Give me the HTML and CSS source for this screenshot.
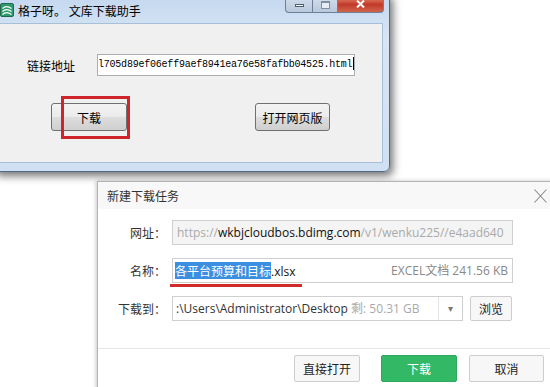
FILE: index.html
```html
<!DOCTYPE html>
<html lang="zh-CN">
<head>
  <meta charset="UTF-8">
  <title>文库下载助手</title>
  <link rel="stylesheet" href="styles.css">
</head>
<body>
<div class="desk">

  <div class="win">
    <div class="win-title">
      <svg class="app-icon" width="14" height="14" viewBox="0 0 14 14">
        <rect x="0.5" y="0.5" width="13" height="13" rx="1.5" fill="#2f9a6c" stroke="#1f6a4a"/>
        <path d="M2.5 5.5c2.5-2.5 5.5-2.5 9 0M2.5 8.5c2.5-2.5 5.5-2.5 9 0M2.5 11.5c2.5-2.5 5.5-2.5 9 0" stroke="#fff" fill="none" stroke-width="1.1"/>
      </svg>
      <span class="win-caption">格子呀。 文库下载助手</span>
      <div class="win-ctrls">
        <span class="ctl ctl-min"><i></i></span>
        <span class="ctl ctl-max"><i></i></span>
        <span class="ctl ctl-close">
          <svg width="9" height="8" viewBox="0 0 9 8">
            <path d="M1 0.5L8 7.5M8 0.5L1 7.5" stroke="#fff" stroke-width="2" fill="none"/>
          </svg>
        </span>
      </div>
    </div>
    <div class="win-client">
      <div class="link-row">
        <span class="link-label">链接地址</span>
        <div class="link-box">l705d89ef06eff9aef8941ea76e58fafbb04525.html<span class="caret"></span></div>
      </div>
      <div class="btn-row">
        <button class="btn-classic">下载<span class="mark"></span></button>
        <button class="btn-classic btn-web">打开网页版</button>
      </div>
    </div>
  </div>

  <div class="dlg">
    <div class="dlg-head">
      <span>新建下载任务</span>
      <svg class="dlg-close" width="13" height="14" viewBox="0 0 13 14">
        <path d="M0.5 0.5L12.5 13.5M12.5 0.5L0.5 13.5" stroke="#888" stroke-width="1.1" fill="none"/>
      </svg>
    </div>
    <div class="dlg-body">
      <div class="form-row">
        <span class="form-label">网址：</span>
        <div class="field field-off"><span class="dim">https://</span>wkbjcloudbos.bdimg.com<span class="dim">/v1/wenku225//e4aad640</span></div>
      </div>
      <div class="form-row row-name">
        <span class="form-label">名称：</span>
        <div class="field field-name">
          <span><span class="sel">各平台预算和目标</span>.xlsx</span>
          <span class="dim2">EXCEL文档 241.56 KB</span>
        </div>
        <span class="underline"></span>
      </div>
      <div class="form-row row-path">
        <span class="form-label">下载到：</span>
        <div class="combo">
          <span class="combo-text">:\Users\Administrator\Desktop <span class="dim">剩: 50.31 GB</span></span>
          <span class="combo-arrow">▾</span>
        </div>
        <button class="btn-flat btn-browse">浏览</button>
      </div>
    </div>
    <div class="dlg-foot">
      <button class="btn-flat btn-open">直接打开</button>
      <button class="btn-flat btn-go">下载</button>
      <button class="btn-flat btn-cancel">取消</button>
    </div>
  </div>

</div>
</body>
</html>
```

FILE: styles.css
```css
* {
  box-sizing: border-box;
}
body {
  margin: 0;
  background: #fff;
  font-family: "Noto Sans CJK SC", sans-serif;
  font-size: 12px;
  color: #000;
}
.desk {
  position: relative;
  width: 550px;
  height: 387px;
  overflow: hidden;
}

/* old windows app */
.win {
  position: absolute;
  left: -8px;
  top: -8px;
  width: 398px;
  height: 180px;
  display: flex;
  flex-direction: column;
  padding: 0 6px 8px;
  background: linear-gradient(#c2d6ee, #d7e6f6 25%, #cfe0f3);
  border: 1px solid #52698a;
  border-radius: 6px;
  box-shadow: 3px 4px 8px rgba(0, 0, 0, 0.55);
}
.win-title {
  height: 30px;
  display: flex;
  align-items: center;
  padding: 6px 0 2px 1px;
}
.app-icon {
  display: block;
}
.win-caption {
  margin-left: 4px;
  font-size: 12px;
  color: #000;
}
.win-ctrls {
  display: flex;
  align-self: flex-start;
  margin-top: -6px;
  margin-left: auto;
  margin-right: -1px;
}
.ctl {
  height: 20px;
  display: flex;
  align-items: center;
  justify-content: center;
  border: 1px solid #6d7f99;
  border-top: none;
}
.ctl-min {
  width: 27px;
  border-radius: 0 0 0 4px;
  background: linear-gradient(#dfe8f2, #c9d6e6 50%, #b9c9dc);
  border-right: none;
}
.ctl-min i {
  width: 9px;
  height: 3px;
  margin-top: 6px;
  background: #fff;
  border: 1px solid #4d5c70;
}
.ctl-max {
  width: 26px;
  background: linear-gradient(#dfe8f2, #c9d6e6 50%, #b9c9dc);
}
.ctl-max i {
  width: 9px;
  height: 8px;
  margin-top: 4px;
  border: 1px solid #7f8ea3;
  border-top-width: 2px;
  background: #e7edf4;
}
.ctl-close {
  width: 46px;
  border-radius: 0 0 4px 0;
  border-left: none;
  background: linear-gradient(#e79a88, #d25a43 45%, #c0392a 60%, #d2654c);
  align-items: flex-end;
  padding-bottom: 4px;
}
.ctl-close svg {
  display: block;
}
.win-client {
  flex: 1;
  background: #f0f0f0;
  border: 1px solid #a9bfd8;
  padding: 30px 0 0 27px;
}
.link-row {
  display: flex;
  align-items: center;
}
.link-label {
  width: 70px;
}
.link-box {
  width: 258px;
  height: 22px;
  background: #fff;
  border: 1px solid #abadb3;
  font-family: "Liberation Mono", monospace;
  font-size: 10px;
  letter-spacing: -0.22px;
  line-height: 20px;
  padding-left: 0;
  white-space: nowrap;
  overflow: hidden;
}
.caret {
  display: inline-block;
  width: 1px;
  height: 13px;
  background: #000;
  vertical-align: -3px;
  margin-left: 1px;
}
.btn-row {
  display: flex;
  margin: 27px 0 0 24px;
}
.btn-classic {
  position: relative;
  width: 76px;
  height: 28px;
  border: 1px solid #707070;
  border-radius: 3px;
  background: linear-gradient(#f3f3f3, #ebebeb 48%, #dddddd 52%, #cfcfcf);
  font-family: inherit;
  font-size: 12px;
  color: #000;
  padding: 0;
}
.btn-web {
  width: 75px;
  margin-left: 128px;
}
.mark {
  position: absolute;
  left: 9px;
  top: -8px;
  width: 69px;
  height: 43px;
  border: 3px solid #d0242b;
}

/* download dialog */
.dlg {
  position: absolute;
  left: 97px;
  top: 181px;
  width: 462px;
  height: 215px;
  background: #fff;
  border: 1px solid #b4b4b4;
  box-shadow: -1px 0 4px rgba(0, 0, 0, 0.22);
}
.dlg-head {
  height: 27px;
  display: flex;
  align-items: center;
  padding-left: 9px;
  color: #333;
  background: #f8f8f8;
}
.dlg-close {
  margin-left: auto;
  margin-right: 11px;
}
.dlg-body {
  padding-top: 11px;
}
.form-row {
  position: relative;
  display: flex;
  align-items: center;
  height: 25px;
}
.row-name {
  margin-top: 13px;
}
.row-path {
  margin-top: 13px;
}
.form-label {
  width: 68px;
  margin-right: 6px;
  text-align: right;
  color: #333;
}
.field {
  width: 341px;
  height: 25px;
  border: 1px solid #cfcfcf;
  padding-left: 4px;
  line-height: 23px;
  font-family: "Open Sans", "Noto Sans CJK SC", sans-serif;
  font-size: 12px;
  color: #111;
  white-space: nowrap;
  overflow: hidden;
}
.field-off {
  background: #f4f4f4;
}
.dim {
  color: #aaa;
}
.field-name {
  display: flex;
  justify-content: space-between;
  padding: 0 4px 0 2px;
}
.sel {
  background: #3a8fe0;
  color: #fff;
  font-family: "Noto Sans CJK SC", sans-serif;
}
.dim2 {
  color: #888;
}
.underline {
  position: absolute;
  left: 72px;
  top: 26px;
  width: 132px;
  height: 3px;
  background: #cf2b2b;
}
.combo {
  width: 291px;
  height: 25px;
  display: flex;
  border: 1px solid #cfcfcf;
  font-family: "Open Sans", "Noto Sans CJK SC", sans-serif;
  color: #333;
}
.combo-text {
  flex: 1;
  padding-left: 3px;
  line-height: 23px;
  white-space: nowrap;
  overflow: hidden;
}
.combo-arrow {
  width: 24px;
  border-left: 1px solid #e3e3e3;
  text-align: center;
  line-height: 23px;
  font-size: 10px;
  color: #777;
}
.btn-flat {
  height: 25px;
  border: 1px solid #cdcdcd;
  border-radius: 2px;
  background: #f7f7f7;
  font-family: inherit;
  font-size: 12px;
  color: #222;
  padding: 0;
}
.btn-browse {
  width: 42px;
  margin-left: 7px;
}
.dlg-foot {
  display: flex;
  margin-top: 27px;
  padding: 6px 0 0 196px;
  border-top: 1px solid #e6e6e6;
}
.dlg-foot .btn-flat {
  height: 27px;
}
.btn-open {
  width: 66px;
}
.btn-go {
  width: 76px;
  margin-left: 21px;
  background: #33b866;
  border-color: #2ea85c;
  color: #fff;
}
.btn-cancel {
  width: 75px;
  margin-left: 12px;
}
```
